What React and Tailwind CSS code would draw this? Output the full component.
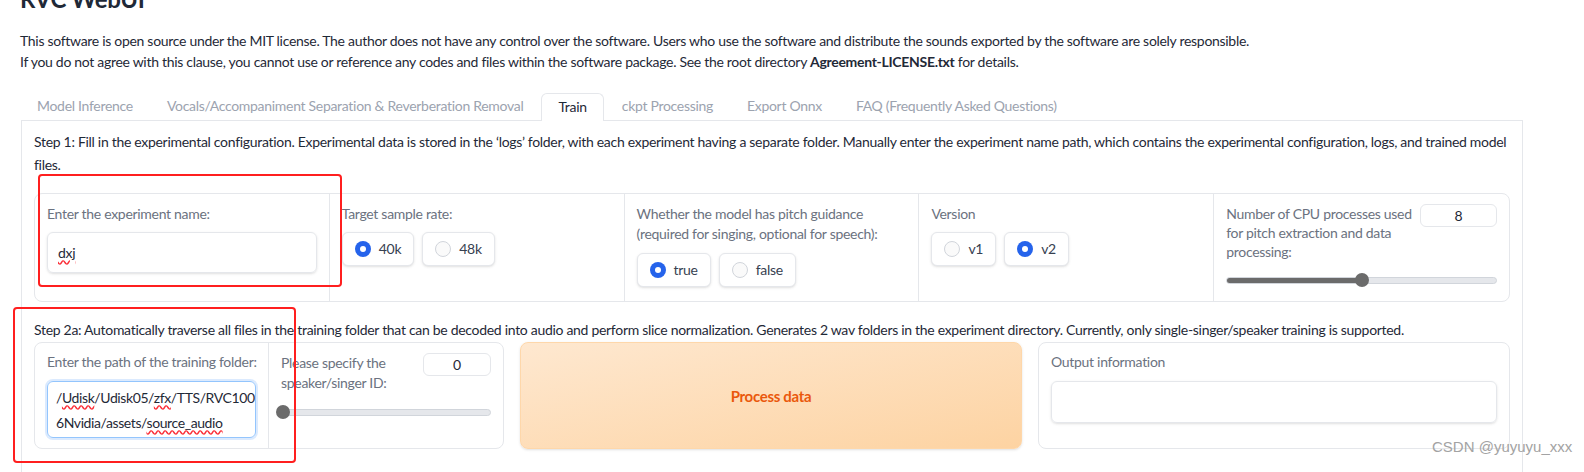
import React from 'react';

const font = { fontFamily: 'Lato, "Noto Sans", sans-serif', letterSpacing: '-0.3px' };

function Radio({ label, checked }) {
    return (
        <div className="flex items-center gap-2 h-[34px] px-[12px] rounded-md border border-[#e5e7eb] bg-white shadow-sm text-[14px] text-[#374151]">
            {checked ? (
                <span className="w-4 h-4 rounded-full bg-[#2563eb] flex items-center justify-center">
                    <span className="w-[6px] h-[6px] rounded-full bg-white"></span>
                </span>
            ) : (
                <span className="w-4 h-4 rounded-full border border-[#d1d5db] bg-[#fafafa]"></span>
            )}
            <span>{label}</span>
        </div>
    );
}

function Slider({ pct }) {
    return (
        <div className="relative h-[14px] flex items-center">
            <div className="w-full h-[7px] rounded-full bg-[#e5e7eb] border border-[#d1d5db] overflow-hidden">
                <div className="h-full bg-[#6b6b6b]" style={{ width: `${pct}%` }}></div>
            </div>
            <div className="absolute top-0 w-[14px] h-[14px] rounded-full bg-[#6b6b6b] -translate-x-1/2" style={{ left: `${pct === 0 ? 1 : pct}%` }}></div>
        </div>
    );
}

function NumBox({ value, w }) {
    return (
        <div className={`${w} h-[23px] shrink-0 rounded-md border border-[#e5e7eb] bg-white flex items-center justify-center text-[14px] text-[#1f2937]`}>
            {value}
        </div>
    );
}

const wavy = 'underline decoration-wavy decoration-red-500 underline-offset-2';

export default function App() {
    return (
        <div className="relative w-[1584px] h-[472px] overflow-hidden bg-white" style={font}>
            <div className="px-5 -mt-[16px] text-[24px] font-bold leading-[30px] text-[#1f2937]">RVC WebUI</div>

            <div className="px-5 mt-[16px] text-[14px] leading-[21px] text-[#1f2937]">
                <p>This software is open source under the MIT license. The author does not have any control over the software. Users who use the software and distribute the sounds exported by the software are solely responsible.</p>
                <p>If you do not agree with this clause, you cannot use or reference any codes and files within the software package. See the root directory <b>Agreement-LICENSE.txt</b> for details.</p>
            </div>

            <div className="ml-[21px] mt-[21px] flex gap-[2px] text-[14px] leading-[26px] text-[#9ca3af]">
                <div className="px-4 h-[27px]">Model Inference</div>
                <div className="px-4 h-[27px]">Vocals/Accompaniment Separation &amp; Reverberation Removal</div>
                <div className="px-4 h-[28px] -mb-px relative z-10 bg-white border border-b-0 border-[#e5e7eb] rounded-t-md text-[#1f2937]">Train</div>
                <div className="px-4 h-[27px]">ckpt Processing</div>
                <div className="px-4 h-[27px]">Export Onnx</div>
                <div className="px-4 h-[27px]">FAQ (Frequently Asked Questions)</div>
            </div>

            <div className="ml-[21px] w-[1502px] h-[400px] border border-[#e5e7eb] px-3 pt-[9px]">
                <p className="text-[14px] leading-[23px] text-[#1f2937]">
                    Step 1: Fill in the experimental configuration. Experimental data is stored in the ‘logs’ folder, with each experiment having a separate folder. Manually enter the experiment name path, which contains the experimental configuration, logs, and trained model files.
                </p>

                <div className="mt-[17px] h-[109px] grid grid-cols-5 divide-x divide-[#e5e7eb] rounded-lg border border-[#e5e7eb] text-[14px] leading-[20px] text-[#6b7280]">
                    <div className="px-3 pt-[10px]">
                        <div>Enter the experiment name:</div>
                        <div className="mt-2 h-[41px] rounded-md border border-[#e5e7eb] shadow-sm px-[10px] flex items-center text-[#1f2937]">
                            <span className={wavy}>dxj</span>
                        </div>
                    </div>
                    <div className="px-3 pt-[10px]">
                        <div>Target sample rate:</div>
                        <div className="mt-2 flex gap-[8px]">
                            <Radio label="40k" checked />
                            <Radio label="48k" />
                        </div>
                    </div>
                    <div className="px-3 pt-[10px]">
                        <div>Whether the model has pitch guidance (required for singing, optional for speech):</div>
                        <div className="mt-[9px] flex gap-[8px]">
                            <Radio label="true" checked />
                            <Radio label="false" />
                        </div>
                    </div>
                    <div className="px-3 pt-[10px]">
                        <div>Version</div>
                        <div className="mt-2 flex gap-[8px]">
                            <Radio label="v1" />
                            <Radio label="v2" checked />
                        </div>
                    </div>
                    <div className="px-3 pt-[10px]">
                        <div className="flex gap-2">
                            <div className="leading-[19px]">Number of CPU processes used for pitch extraction and data processing:</div>
                            <NumBox value="8" w="w-[77px]" />
                        </div>
                        <div className="mt-[12px]">
                            <Slider pct={50} />
                        </div>
                    </div>
                </div>

                <p className="mt-[17px] text-[14px] leading-[22px] text-[#1f2937]">
                    Step 2a: Automatically traverse all files in the training folder that can be decoded into audio and perform slice normalization. Generates 2 wav folders in the experiment directory. Currently, only single-singer/speaker training is supported.
                </p>

                <div className="mt-px flex gap-4 h-[107px] text-[14px] leading-[20px] text-[#6b7280]">
                    <div className="w-[470px] flex divide-x divide-[#e5e7eb] rounded-lg border border-[#e5e7eb]">
                        <div className="w-1/2 px-3 pt-[9px]">
                            <div className="whitespace-nowrap">Enter the path of the training folder:</div>
                            <div className="mt-[9px] h-[57px] rounded-md border border-[#93c5fd] shadow-[0_0_0_2px_#dbeafe] px-[8px] flex flex-col justify-center leading-[25px] text-[#1f2937] whitespace-nowrap overflow-hidden tracking-[-0.4px]">
                                <div>/<span className={wavy}>Udisk</span>/Udisk05/<span className={wavy}>zfx</span>/TTS/RVC100</div>
                                <div>6Nvidia/assets/<span className={wavy}>source_audio</span></div>
                            </div>
                        </div>
                        <div className="w-1/2 px-3 pt-[10px]">
                            <div className="flex justify-between gap-2">
                                <div>Please specify the speaker/singer ID:</div>
                                <NumBox value="0" w="w-[68px]" />
                            </div>
                            <div className="mt-[12px]">
                                <Slider pct={0} />
                            </div>
                        </div>
                    </div>

                    <div className="flex-1 rounded-lg border border-[#fed7aa] bg-gradient-to-br from-[#fee8d0] to-[#fdd3a2] shadow-sm flex items-center justify-center text-[15px] font-bold text-[#ea580c]">
                        Process data
                    </div>

                    <div className="w-[472px] rounded-lg border border-[#e5e7eb] px-3 pt-[9px]">
                        <div>Output information</div>
                        <div className="mt-[9px] h-[42px] rounded-md border border-[#e5e7eb] shadow-sm"></div>
                    </div>
                </div>
            </div>

            <div className="absolute left-[38px] top-[174px] w-[304px] h-[113px] border-2 border-[#ff1f1f] rounded-sm pointer-events-none"></div>
            <div className="absolute left-[13px] top-[307px] w-[283px] h-[156px] border-2 border-[#ff1f1f] rounded-sm pointer-events-none"></div>

            <div className="absolute left-[1432px] top-[436px] text-[15px] text-[#a3a3a3]" style={{ fontFamily: '"Liberation Sans", Arial, sans-serif', letterSpacing: '0px' }}>
                CSDN @yuyuyu_xxx
            </div>
        </div>
    );
}
